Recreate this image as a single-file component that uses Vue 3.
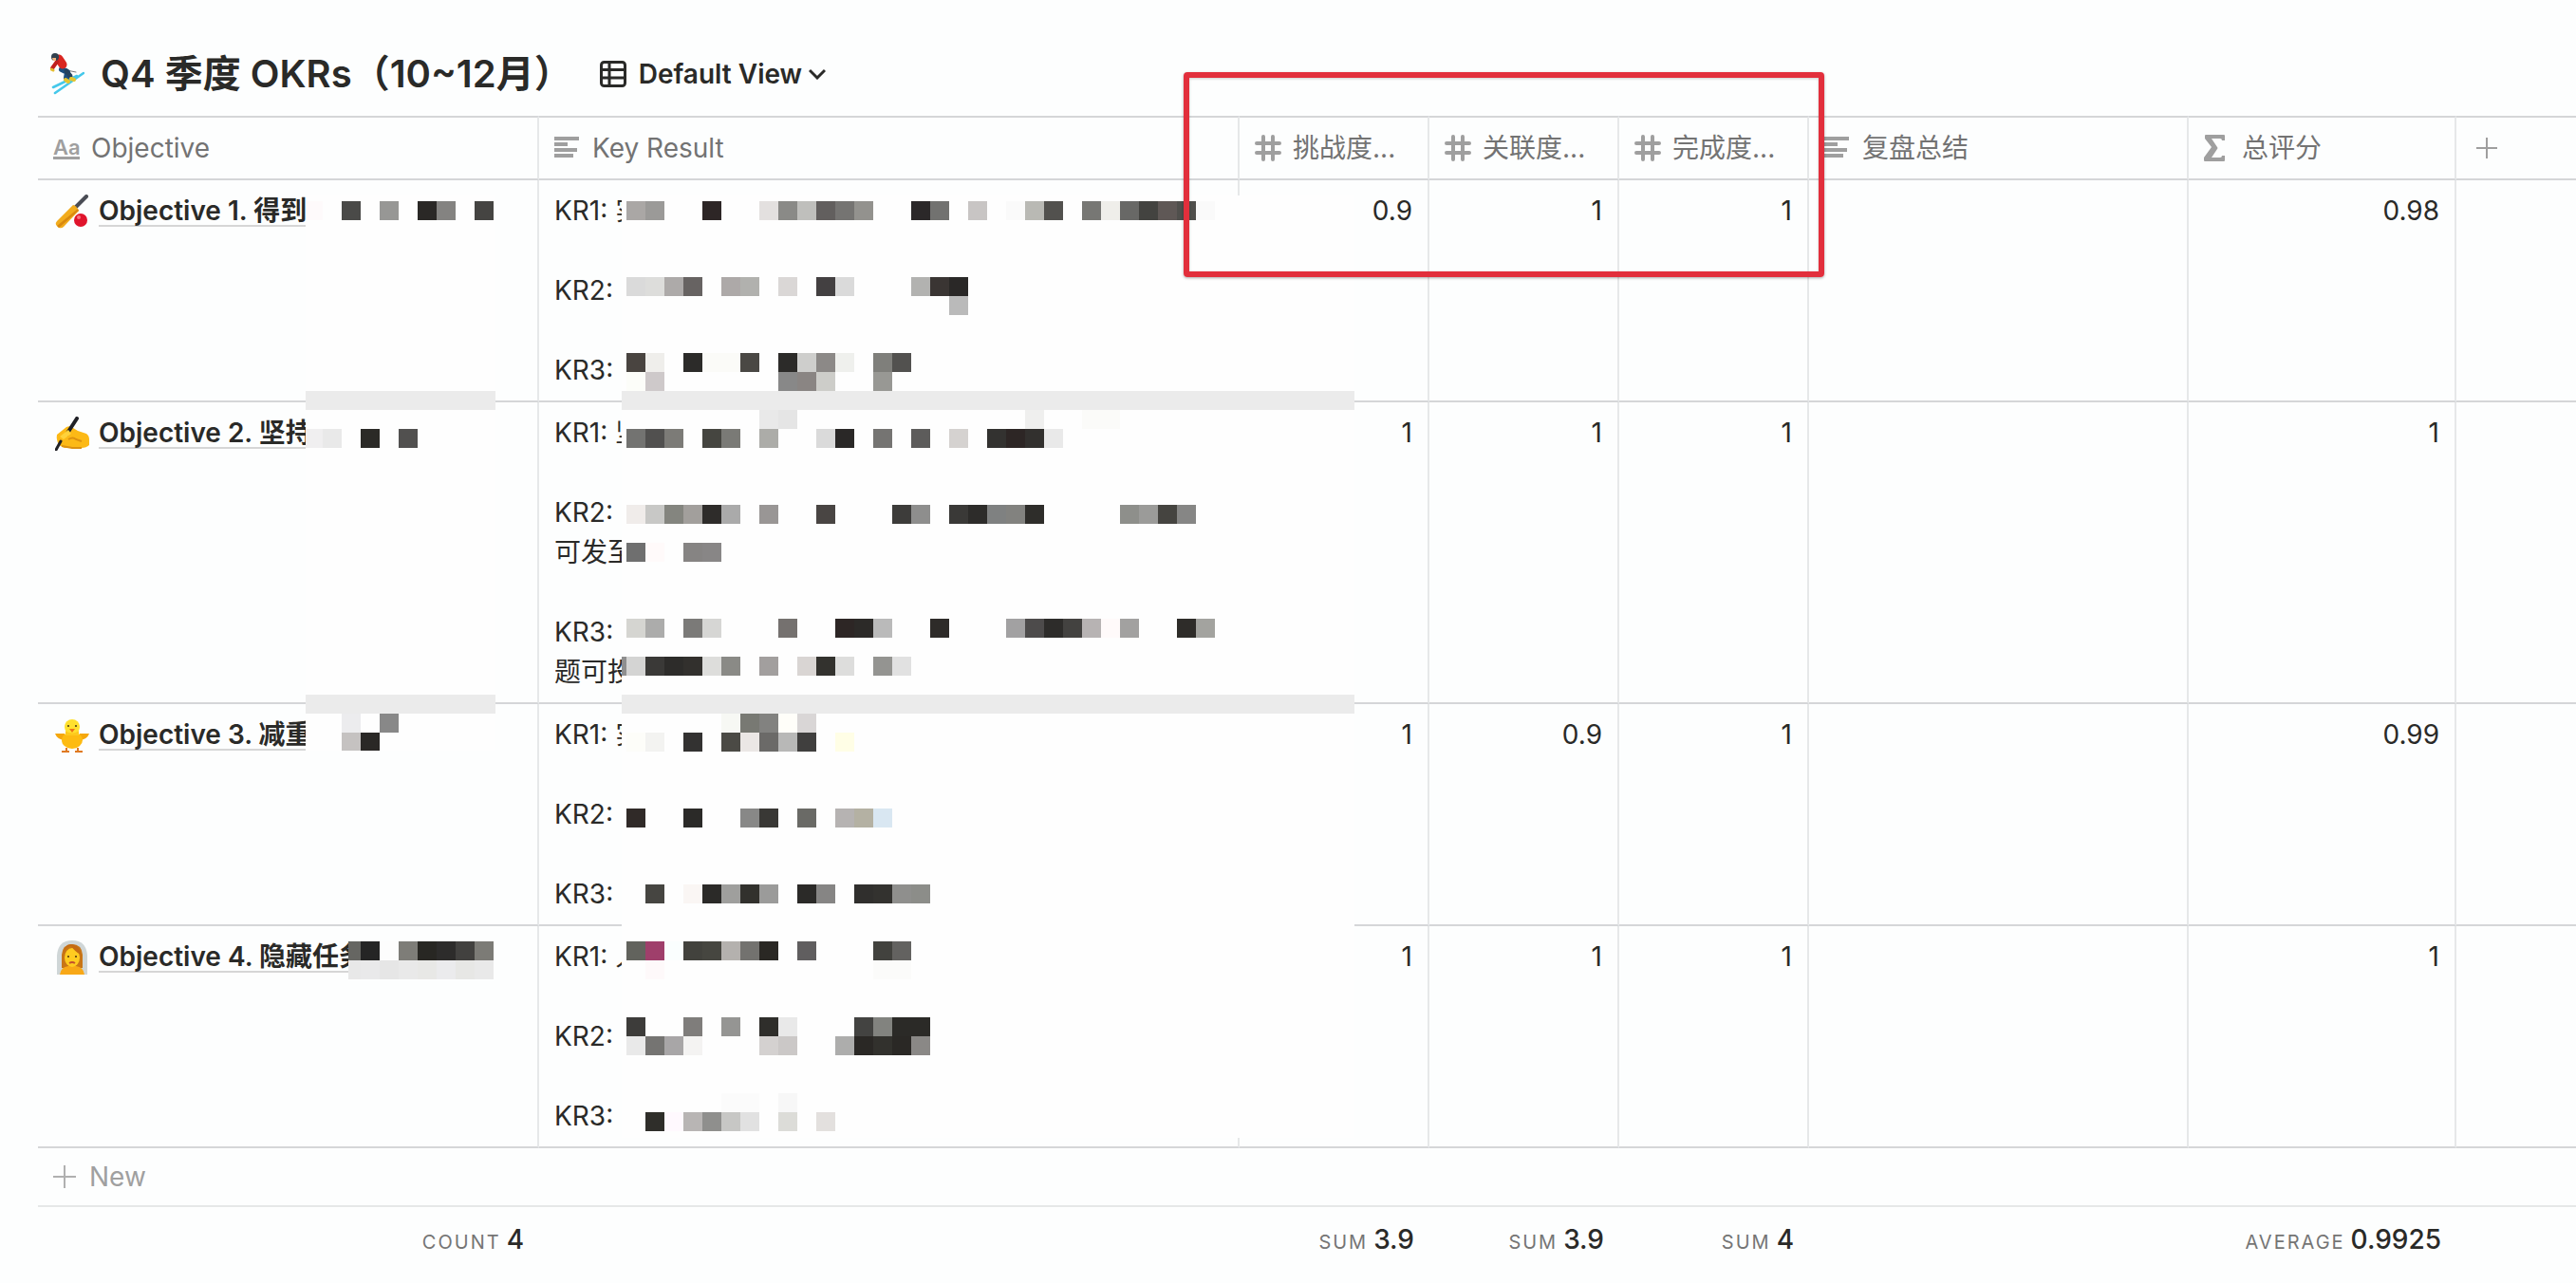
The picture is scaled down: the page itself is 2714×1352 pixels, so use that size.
<script setup>
const columns = [
  { key: 'objective', label: 'Objective', icon: 'title', width: 528 },
  { key: 'result', label: 'Key Result', icon: 'text', width: 738 },
  { key: 'challenge', label: '挑战度...', icon: 'number', width: 200 },
  { key: 'relevance', label: '关联度...', icon: 'number', width: 200 },
  { key: 'completion', label: '完成度...', icon: 'number', width: 200 },
  { key: 'review', label: '复盘总结', icon: 'text', width: 400 },
  { key: 'score', label: '总评分', icon: 'formula', width: 282 },
]

const rows = [
  { icon: 'bat', title: 'Objective 1. 得到', lines: ['KR1: 实', '', 'KR2:', '', 'KR3:'], scores: ['0.9', '1', '1'], total: '0.98' },
  { icon: 'writing', title: 'Objective 2. 坚持', lines: ['KR1: 坚', '', 'KR2:', '可发至', '', 'KR3:', '题可投'], scores: ['1', '1', '1'], total: '1' },
  { icon: 'chick', title: 'Objective 3. 减重', lines: ['KR1: 实', '', 'KR2:', '', 'KR3:'], scores: ['1', '0.9', '1'], total: '0.99' },
  { icon: 'bride', title: 'Objective 4. 隐藏任务', lines: ['KR1: 人', '', 'KR2:', '', 'KR3:'], scores: ['1', '1', '1'], total: '1' },
]

const summary = [
  { label: 'COUNT', value: '4' },
  null,
  { label: 'SUM', value: '3.9' },
  { label: 'SUM', value: '3.9' },
  { label: 'SUM', value: '4' },
  null,
  { label: 'AVERAGE', value: '0.9925' },
]

// Redaction mosaic: each entry is a row offset and "column:colour" pairs on a 20px grid.
const BLOCK = 20
function blocks(source) {
  return source.flatMap(([y, cells]) =>
    cells.split(' ').map((cell) => {
      const [col, fill] = cell.split(':')
      return { x: Number(col) * BLOCK, y, fill: '#' + fill }
    })
  )
}

const resultBlocks = blocks([
  [212, '1:aaa7a5 2:9b9a98 5:2d2626 8:e3e0df 9:8a8a87 10:bfbfbc 11:625f5e 12:757472 13:93928e 16:2b2829 17:727270 19:c8c5c4 21:fafafa 22:b9b9b4 23:52514e 25:777774 26:efeeea 27:686866 28:434340 29:5f5856 30:504f4c 31:fafafa'],
  [292, '1:dadada 2:dddddb 3:adaaa9 4:676362 6:ada9a8 7:b1b1ae 9:dad7d6 11:434041 12:dadada 16:b2b2b0 17:3a3533 18:2a2827'],
  [312, '18:bababa'],
  [372, '1:494440 2:efeeeb 4:2c2b29 5:fbfbf8 6:fbfbf8 7:4a4844 9:2c2b29 10:cececc 11:8c8987 12:eff0ed 14:7f7f7b 15:52514f'],
  [392, '1:fcfdf9 2:cec9ca 9:888888 10:8a8583 11:cdcdc9 14:989894'],
  [432, '8:e9e9e9 9:e5e5e5 22:efefee 25:fbfbf9 26:fbfbf9'],
  [452, '1:737371 2:51504f 3:7c7b77 5:454540 6:7a7a76 8:acaca8 11:dadada 12:2a2827 14:757472 16:5d5c5b 18:d5d2d0 20:333230 21:2d2625 22:32302e 23:e9e9e9'],
  [532, '1:f0ecea 2:c8c8c6 3:84857f 4:a29f9c 5:2e2c2a 6:aaaaaa 8:999695 11:494543 15:3d3c3a 16:8e8e8d 18:3a3937 19:2d2c2a 20:7f8181 21:82827f 22:2e2d2a 27:8e8f8b 28:9b9b99 29:454440 30:868685'],
  [572, '1:6f6f6f 2:fffafa 4:868483 5:888686'],
  [652, '1:d5d5d1 2:acacab 4:7b7a78 5:d6d6d4 9:75716f 12:2d2625 13:2c2a28 14:bababa 17:2e2b29 21:a2a1a2 22:4d4b4b 23:2d2c2a 24:434240 25:b7b3b3 26:fffafa 27:a2a1a0 30:2e2c29 31:a3a39f'],
  [692, '0:8f8f8f 1:d4d4d3 2:3a3937 3:2d2c2a 4:32302d 5:dddddb 6:8a8a86 8:a29f9e 10:d9d5d3 11:33322e 12:dddddc 14:949491 15:e1e1e1'],
  [752, '6:f7f8f4 7:787973 8:828280 9:fffef9 10:d9d6d6'],
  [772, '1:fdfdf9 2:f3f3f1 4:333231 6:4b4a45 7:ebe7e5 8:6b6a68 9:b8b8b7 10:403f3e 12:fffee6'],
  [852, '1:302a28 4:2b2a28 7:888887 8:393835 10:6a6a66 12:b6b3b2 13:b4b1a3 14:d9e7f2'],
  [932, '2:464541 4:faf6f4 5:2b2a28 6:9f9f9d 7:32312d 8:9b9b9a 10:2b2a28 11:868584 13:302f2d 14:33322f 15:8f8f8d 16:8c8d89'],
  [992, '1:62635d 2:9f3f6b 3:fafefe 4:42423d 5:464640 6:b4b1ae 7:73726f 8:2a2824 10:605e5f 14:42423e 15:636260'],
  [1012, '2:fef9fa 14:fbfbfa 15:fbfbfa'],
  [1072, '1:3d3c3a 4:7f7d7b 6:959593 8:2f2e2b 9:e9e9e9 13:434341 14:82837f 15:2b2a27 16:2b2a27'],
  [1092, '1:e9e9e9 2:757472 3:a8a6a7 4:f4f3f2 8:d4d1d0 9:cbc8c7 12:adadac 13:2a2825 14:32312d 15:2a2825 16:8a8886'],
  [1152, '6:fbfbfb 7:fbfbfb 9:f7f7f7'],
  [1172, '2:2f2e2a 3:fff9fe 4:b8b5b4 5:8f8f8d 6:c7c7c5 7:e1e1e1 9:dcdcd8 11:e3e0de'],
])

const objectiveBlocks = blocks([
  [212, '0:fefafb 2:4a4a48 4:979795 6:2a2826 7:848381 9:454442'],
  [452, '0:f0eff0 1:e9e9e9 3:2b2a27 5:51504f'],
  [752, '2:ececee 4:888888'],
  [772, '2:c5c2c1 3:2a2826'],
])

const hiddenTaskBlocks = blocks([
  [992, '0:666662 1:252525 2:fdfdfd 3:7e7d78 4:282723 5:2d2c2b 6:42413f 7:7c7b76'],
  [1012, '0:e8e8e8 1:e9e9ea 2:e6e6e6 3:e9e9e9 4:e8e8e6 5:ebebed 6:e7e7e5 7:e9e9e9'],
])
</script>

<template>
  <main class="page">
    <header class="heading">
      <svg class="emoji-lg" viewBox="0 0 36 44" aria-hidden="true">
        <g fill="none" stroke-linecap="round" stroke-linejoin="round">
          <path d="M3 36 28 24M5 42 35 21" stroke="#45c8ea" stroke-width="2.6" />
          <path d="M17 18 27 20" stroke="#77777d" stroke-width="1" />
          <path d="M12 17 18 20 17 26" stroke="#1c4f80" stroke-width="6" />
          <path d="M17 19 21 24" stroke="#24425f" stroke-width="5" />
          <path d="M16 28 19 30M22 27 25 28" stroke="#e5c52f" stroke-width="4" />
          <path d="M9 6 13 12" stroke="#d92620" stroke-width="9" />
          <path d="M7 9 2 16" stroke="#c01f1c" stroke-width="4" />
          <path d="M1 17 3 18" stroke="#e5bd2f" stroke-width="3" />
        </g>
        <circle cx="5" cy="4" r="4" fill="#31404e" />
        <path d="M2 5h4v3H3z" fill="#f1b27e" />
      </svg>
      <h1>Q4 季度 OKRs（10~12月）</h1>
      <button type="button" class="view">
        <svg class="view-icon" viewBox="0 0 28 28" aria-hidden="true">
          <rect x="1.5" y="1.5" width="25" height="25" rx="3" />
          <path d="M1.5 9.5h25M1.5 18h25M10 1.5v25" />
        </svg>
        Default View
        <svg class="chevron" viewBox="0 0 18 12" aria-hidden="true"><path d="M1 2l8 8 8-8" /></svg>
      </button>
    </header>

    <section class="board">
      <table>
        <colgroup>
          <col v-for="c in columns" :key="c.key" :style="{ width: c.width + 'px' }" />
          <col />
        </colgroup>
        <thead>
          <tr>
            <th v-for="c in columns" :key="c.key" scope="col">
              <div class="head" :class="c.icon">
                <span v-if="c.icon === 'title'" class="aa" aria-hidden="true">Aa</span>
                <svg v-else viewBox="0 0 28 28" aria-hidden="true">
                  <path v-if="c.icon === 'text'" d="M0 2h26v4H0zM0 8h14v4H0zM0 14h24v4H0zM0 20h20v4H0z" />
                  <path
                    v-else-if="c.icon === 'number'"
                    class="stroke"
                    d="M9 2v24M19 2v24M2 9h24M2 19h24"
                  />
                  <path
                    v-else
                    d="M2 0h19q1 0 1 1v5h-3q0-2-2-2H8l6 9q1 1 0 2l-6 9h9q2 0 2-2h3v5q0 1-1 1H1q-1 0-1-1v-3l8-11L1 4V1q0-1 1-1z"
                  />
                </svg>
                <span>{{ c.label }}</span>
              </div>
            </th>
            <th class="last">
              <button type="button" class="add" aria-label="Add column">
                <svg viewBox="0 0 22 22" aria-hidden="true"><path d="M11 0v22M0 11h22" /></svg>
              </button>
            </th>
          </tr>
        </thead>
        <tbody>
          <tr v-for="row in rows" :key="row.icon">
            <td>
              <div class="objective">
                <svg v-if="row.icon === 'bat'" viewBox="0 0 36 36" aria-hidden="true">
                  <path d="M22 13 33 2" stroke="#4a4d55" stroke-width="4" stroke-linecap="round" />
                  <path d="M2 28 19 11q3 0 6 6L9 34q-2 2-5 1l-3-3q-1-2 1-4z" fill="#f2ac1d" />
                  <path d="M4 35 25 17l-1-2L2 33z" fill="#d9890f" />
                  <circle cx="27" cy="27" r="7" fill="#e0142c" />
                  <circle cx="25" cy="24" r="2" fill="#f5737f" />
                </svg>
                <svg v-else-if="row.icon === 'writing'" viewBox="0 0 36 36" aria-hidden="true">
                  <path d="M2 19 12 11q4-2 7 1l5 3 9 3q3 2 3 6v6q-3 3-8 3H10l-6-3q-3-6-2-11z" fill="#fcb916" />
                  <path d="M14 24q5-3 8 0l6 2M7 31l11 2h10" fill="none" stroke="#dc9110" stroke-width="2" />
                  <path d="M12 19 23 2" stroke="#202126" stroke-width="4" stroke-linecap="round" />
                  <path d="M1 35 6 26" stroke="#202126" stroke-width="3" stroke-linecap="round" />
                  <path d="M5 21l9-7 3 4-8 6z" fill="#ffd23a" />
                </svg>
                <svg v-else-if="row.icon === 'chick'" viewBox="0 0 36 36" aria-hidden="true">
                  <path d="M12 31v4M24 31v4M7 35h8M21 35h8" stroke="#e07a21" stroke-width="2" />
                  <path d="M10 16 0 16q2 6 10 7zM26 16l10 0q-2 6-10 7z" fill="#f5a70d" />
                  <ellipse cx="18" cy="23" rx="11" ry="9" fill="#fdbb12" />
                  <circle cx="18" cy="9" r="8" fill="#ffe02e" />
                  <path d="M11 13q7 5 14 0v5H11z" fill="#fdc91d" />
                  <circle cx="14" cy="8" r="1" fill="#403012" /><circle cx="22" cy="8" r="1" fill="#403012" />
                  <path d="M15 11h6l-3 4z" fill="#ef7317" />
                </svg>
                <svg v-else viewBox="0 0 36 36" aria-hidden="true">
                  <path d="M2 36V16Q3 0 18 0t16 16v20z" fill="#cfd6d7" />
                  <path d="M7 29V15Q8 4 18 4t11 11v14z" fill="#c87516" />
                  <path d="M5 36q1-8 9-9h8q8 1 9 9z" fill="#f8a817" />
                  <ellipse cx="18" cy="18" rx="8" ry="10" fill="#ffcb20" />
                  <path d="M9 17Q10 5 17 6q4 6 10 9-2-11-10-11T9 17z" fill="#c56b13" />
                  <circle cx="14" cy="17" r="1" fill="#472c0e" /><circle cx="22" cy="17" r="1" fill="#472c0e" />
                  <path d="M15 24q3-2 6 0" fill="none" stroke="#c2502d" stroke-width="2" />
                </svg>
                <a href="#">{{ row.title }}</a>
              </div>
            </td>
            <td>
              <p v-for="(line, i) in row.lines" :key="i">{{ line }}</p>
            </td>
            <td v-for="(score, i) in row.scores" :key="i" class="number">{{ score }}</td>
            <td></td>
            <td class="number">{{ row.total }}</td>
            <td class="last"></td>
          </tr>
          <tr class="new-row">
            <td colspan="8">
              <button type="button" class="new">
                <svg viewBox="0 0 24 24" aria-hidden="true"><path d="M12 0v24M0 12h24" /></svg>
                New
              </button>
            </td>
          </tr>
        </tbody>
        <tfoot>
          <tr>
            <td v-for="(item, i) in summary" :key="i">
              <template v-if="item">
                <span class="calc">{{ item.label }}</span><span class="calc-value">{{ item.value }}</span>
              </template>
            </td>
            <td></td>
          </tr>
        </tfoot>
      </table>

      <svg class="mosaic result-mosaic" viewBox="655 206 772 993" aria-hidden="true">
        <rect x="655" y="206" width="772" height="993" fill="#fefefe" />
        <rect x="655" y="412" width="772" height="20" fill="#ebebeb" />
        <rect x="655" y="732" width="772" height="20" fill="#ebebeb" />
        <rect v-for="(b, i) in resultBlocks" :key="i" :x="b.x + 640" :y="b.y" width="20" height="20" :fill="b.fill" />
      </svg>
      <svg class="mosaic objective-mosaic" viewBox="322 206 200 585" aria-hidden="true">
        <rect x="322" y="206" width="200" height="585" fill="#fefefe" />
        <rect x="322" y="412" width="200" height="20" fill="#ebebeb" />
        <rect x="322" y="732" width="200" height="20" fill="#ebebeb" />
        <rect v-for="(b, i) in objectiveBlocks" :key="i" :x="b.x + 320" :y="b.y" width="20" height="20" :fill="b.fill" />
      </svg>
      <svg class="mosaic task-mosaic" viewBox="367 992 153 40" aria-hidden="true">
        <rect v-for="(b, i) in hiddenTaskBlocks" :key="i" :x="b.x + 360" :y="b.y" width="20" height="20" :fill="b.fill" />
      </svg>
      <div class="highlight"></div>
    </section>
  </main>
</template>

<style>
body {
  margin: 0;
  background: #fdfefe;
}
</style>

<style scoped>
.page {
  font-family: Inter, "Noto Sans CJK SC", sans-serif;
  font-size: 28px;
  line-height: 42px;
  color: #2a2a28;
  overflow: hidden;
}
.heading {
  display: flex;
  align-items: center;
  height: 88px;
  padding: 34px 0 0 53px;
}
.emoji-lg {
  width: 36px;
  height: 44px;
  margin-right: 17px;
}
h1 {
  margin: 0;
  font-size: 40px;
  line-height: 48px;
  font-weight: 600;
  white-space: nowrap;
}
button {
  display: flex;
  align-items: center;
  padding: 0;
  border: 0;
  background: none;
  font: inherit;
  color: inherit;
  cursor: pointer;
}
svg {
  flex: none;
  fill: none;
}
.view {
  margin-left: 29px;
  font-weight: 600;
  white-space: nowrap;
}
.view-icon {
  width: 28px;
  height: 28px;
  margin-right: 13px;
  stroke: #2a2a28;
  stroke-width: 3;
}
.chevron {
  width: 18px;
  height: 12px;
  margin-left: 7px;
  stroke: #2a2a28;
  stroke-width: 3;
}
.board {
  position: relative;
  margin-left: 40px;
}
table {
  width: 100%;
  table-layout: fixed;
  border-collapse: separate;
  border-spacing: 0;
}
th,
td {
  box-sizing: border-box;
  padding: 11px 16px;
  border-right: 2px solid #e6e8e9;
  border-bottom: 2px solid #d5d6d8;
  text-align: left;
  vertical-align: top;
  font-weight: 400;
  white-space: nowrap;
}
th {
  border-top: 2px solid #d5d6d8;
  color: #737373;
}
.last {
  border-right: 0;
}
.head {
  display: flex;
  align-items: center;
}
.head svg {
  width: 28px;
  height: 28px;
  margin-right: 12px;
  fill: #9f9f9f;
}
.head .stroke {
  stroke: #9f9f9f;
  stroke-width: 4;
  stroke-linecap: round;
}
.aa {
  width: 28px;
  margin-right: 12px;
  border-bottom: 3px solid #9f9f9f;
  color: #9f9f9f;
  font-size: 22px;
  line-height: 20px;
  font-weight: 600;
}
.add {
  height: 42px;
  padding-left: 5px;
}
.add svg {
  width: 22px;
  height: 22px;
  stroke: #9f9f9f;
  stroke-width: 2;
}
.objective {
  display: flex;
  align-items: center;
  height: 44px;
}
.objective svg {
  width: 36px;
  height: 36px;
  margin: 0 10px 0 2px;
}
.objective a {
  border-bottom: 2px solid #d6d6d6;
  color: inherit;
  line-height: 30px;
  font-weight: 600;
  text-decoration: none;
}
p {
  height: 42px;
  margin: 0;
}
.number {
  text-align: right;
}
.new-row td {
  padding: 9px 16px;
  border-right: 0;
  border-bottom-color: #e6e8e8;
}
.new {
  color: #a0a0a0;
}
.new svg {
  width: 24px;
  height: 24px;
  margin-right: 14px;
  stroke: #b0b0b0;
  stroke-width: 2;
}
tfoot td {
  padding: 13px 16px;
  border: 0;
  text-align: right;
}
.calc {
  margin-right: 6px;
  color: #757575;
  font-size: 20px;
  letter-spacing: 2px;
}
.calc-value {
  font-weight: 500;
}
.mosaic {
  position: absolute;
  shape-rendering: crispEdges;
}
.result-mosaic {
  top: 84px;
  left: 615px;
  width: 772px;
  height: 993px;
}
.objective-mosaic {
  top: 84px;
  left: 282px;
  width: 200px;
  height: 585px;
}
.task-mosaic {
  top: 870px;
  left: 327px;
  width: 153px;
  height: 40px;
}
.highlight {
  position: absolute;
  box-sizing: border-box;
  top: -46px;
  left: 1207px;
  width: 675px;
  height: 216px;
  border: 6px solid #e22f3c;
  border-radius: 4px;
  box-shadow: 0 1px 3px #00000055, inset 0 1px 3px #00000033;
  pointer-events: none;
}
</style>
